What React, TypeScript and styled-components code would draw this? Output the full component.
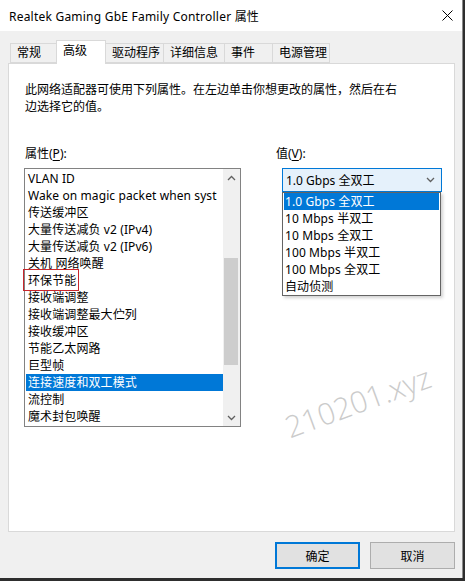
import React from 'react';
import styled, { createGlobalStyle, css } from 'styled-components';

const TABS = [
  { label: '常规', width: 47 },
  { label: '高级', width: 50, active: true },
  { label: '驱动程序', width: 58 },
  { label: '详细信息', width: 61 },
  { label: '事件', width: 48 },
  { label: '电源管理', width: 57 },
];

const PROPERTIES = [
  'VLAN ID',
  'Wake on magic packet when syst',
  '传送缓冲区',
  '大量传送减负 v2 (IPv4)',
  '大量传送减负 v2 (IPv6)',
  '关机 网络唤醒',
  '环保节能',
  '接收端调整',
  '接收端调整最大伫列',
  '接收缓冲区',
  '节能乙太网路',
  '巨型帧',
  '连接速度和双工模式',
  '流控制',
  '魔术封包唤醒',
];

const VALUES = [
  '1.0 Gbps 全双工',
  '10 Mbps 半双工',
  '10 Mbps 全双工',
  '100 Mbps 半双工',
  '100 Mbps 全双工',
  '自动侦测',
];

const GlobalStyle = createGlobalStyle`
  html, body {
    margin: 0;
    padding: 0;
    background: #2e2e2e;
  }
  body {
    font-family: "Noto Sans", "Noto Sans CJK SC", sans-serif;
    font-size: 12px;
    color: #000;
  }
  * { box-sizing: border-box; }
`;

const Window = styled.div`
  width: 463px;
  height: 578px;
  background: #f0f0f0;
  border-right: 1px solid #8a8a8a;
  display: flex;
  flex-direction: column;
`;

const TitleBar = styled.div`
  height: 31px;
  background: #fff;
  display: flex;
  align-items: center;
  padding-left: 9px;
  padding-right: 8px;
`;

const Title = styled.div`
  flex: 1;
  font-size: 12px;
  letter-spacing: 0.22px;
`;

const Body = styled.div`
  padding: 9px 7px 0 8px;
  display: flex;
  flex-direction: column;
`;

const TabStrip = styled.div`
  display: flex;
  align-items: flex-end;
  padding-left: 2px;
  height: 23px;
  position: relative;
  z-index: 1;
`;

const Tab = styled.div<{ $w: number; $active?: boolean }>`
  width: ${(p) => p.$w}px;
  height: 20px;
  border: 1px solid #d9d9d9;
  border-left-width: 0;
  background: #f0f0f0;
  padding-left: 6px;
  line-height: 18px;
  white-space: nowrap;

  &:first-child {
    border-left-width: 1px;
  }

  ${(p) => p.$active && css`
    height: 24px;
    margin-bottom: -1px;
    background: #fff;
    border-left-width: 1px;
    border-bottom: none;
    line-height: 20px;
    margin-left: -1px;
  `}
`;

const Panel = styled.div`
  position: relative;
  height: 469px;
  background: #fff;
  border: 1px solid #d9d9d9;
  padding: 17px 16px 0 16px;
  overflow: hidden;
`;

const Description = styled.p`
  margin: 0;
  max-width: 380px;
  line-height: 17px;
`;

const Columns = styled.div`
  display: grid;
  grid-template-columns: 251px 1fr;
  margin-top: 30px;
`;

const Column = styled.div`
  display: flex;
  flex-direction: column;
  position: relative;
`;

const FieldLabel = styled.div`
  line-height: 17px;
  margin-bottom: 6px;

  u { text-underline-offset: 2px; }
`;

const ListBox = styled.div`
  width: 217px;
  height: 259px;
  margin-left: -1px;
  border: 1px solid #828282;
  display: flex;
  background: #fff;
`;

const ListItems = styled.div`
  flex: 1;
  min-width: 0;
  padding: 1px 0 0 1px;
`;

const ListItem = styled.div<{ $selected?: boolean; $marked?: boolean }>`
  height: 17px;
  line-height: 17px;
  padding-left: 2px;
  white-space: nowrap;
  overflow: ${(p) => (p.$marked ? 'visible' : 'hidden')};
  letter-spacing: 0.1px;

  ${(p) => p.$selected && css`
    background: #0078d7;
    color: #fff;
  `}
`;

const Marked = styled.span`
  position: relative;
  display: inline-block;

  &::after {
    content: '';
    position: absolute;
    left: -5px;
    right: -3px;
    top: -3px;
    bottom: -2px;
    border: 1px solid #c8262b;
  }
`;

const ScrollBar = styled.div`
  width: 17px;
  background: #f0f0f0;
  display: flex;
  flex-direction: column;
`;

const ScrollArrow = styled.div`
  height: 17px;
  display: flex;
  align-items: center;
  justify-content: center;
`;

const ScrollTrack = styled.div`
  flex: 1;
  padding: 72px 2px 0 1px;
`;

const ScrollThumb = styled.div`
  height: 107px;
  background: #cdcdcd;
`;

const ComboWrap = styled.div`
  position: relative;
  margin-left: 6px;
  width: 160px;
`;

const Combo = styled.div`
  height: 24px;
  border: 1px solid #0078d7;
  background: #e5f1fb;
  display: flex;
  align-items: center;
  padding: 0 6px 0 3px;
  justify-content: space-between;
`;

const DropList = styled.div`
  position: absolute;
  top: 24px;
  left: 0;
  width: 159px;
  border: 1px solid #646464;
  background: #fff;
  padding: 0 1px;
  box-shadow: 2px 2px 3px rgba(0, 0, 0, 0.18);
  z-index: 2;
`;

const DropItem = styled.div<{ $selected?: boolean }>`
  height: 17px;
  line-height: 17px;
  padding-left: 1px;
  white-space: nowrap;
  letter-spacing: 0.1px;

  ${(p) => p.$selected && css`
    background: #0078d7;
    color: #fff;
  `}
`;

const Watermark = styled.span`
  position: absolute;
  left: 284px;
  top: 342px;
  font-family: "Open Sans", "Noto Sans", sans-serif;
  font-weight: 300;
  font-size: 30px;
  color: #cbcbcb;
  transform: rotate(-20deg);
  transform-origin: left bottom;
  pointer-events: none;
`;

const ButtonRow = styled.div`
  display: flex;
  justify-content: flex-end;
  gap: 10px;
  margin-top: 10px;
`;

const Button = styled.button<{ $default?: boolean }>`
  width: 85px;
  height: 27px;
  font: inherit;
  color: #000;
  background: #e1e1e1;
  border: 1px solid #adadad;
  padding: 0;

  ${(p) => p.$default && css`
    border: 2px solid #0078d7;
  `}
`;

const Chevron = ({ up, color = '#606060' }: { up?: boolean; color?: string }) => (
  <svg width="9" height="6" viewBox="0 0 9 6">
    <path
      d={up ? 'M1 5 L4.5 1.5 L8 5' : 'M1 1 L4.5 4.5 L8 1'}
      fill="none"
      stroke={color}
      strokeWidth="1.3"
    />
  </svg>
);

export default function App(): JSX.Element {
  return (
    <>
      <GlobalStyle />
      <Window>
        <TitleBar>
          <Title>Realtek Gaming GbE Family Controller 属性</Title>
          <svg width="11" height="11" viewBox="0 0 11 11" style={{ marginRight: 1 }}>
            <path d="M0.5 0.5 L10.5 10.5 M10.5 0.5 L0.5 10.5" stroke="#000" strokeWidth="1" />
          </svg>
        </TitleBar>
        <Body>
          <TabStrip>
            {TABS.map((t) => (
              <Tab key={t.label} $w={t.width} $active={t.active}>{t.label}</Tab>
            ))}
          </TabStrip>
          <Panel>
            <Description>
              此网络适配器可使用下列属性。在左边单击你想更改的属性，然后在右边选择它的值。
            </Description>
            <Columns>
              <Column>
                <FieldLabel>属性(<u>P</u>):</FieldLabel>
                <ListBox>
                  <ListItems>
                    {PROPERTIES.map((item) => (
                      <ListItem
                        key={item}
                        $selected={item === '连接速度和双工模式'}
                        $marked={item === '环保节能'}
                      >
                        {item === '环保节能' ? <Marked>{item}</Marked> : item}
                      </ListItem>
                    ))}
                  </ListItems>
                  <ScrollBar>
                    <ScrollArrow><Chevron up /></ScrollArrow>
                    <ScrollTrack><ScrollThumb /></ScrollTrack>
                    <ScrollArrow><Chevron /></ScrollArrow>
                  </ScrollBar>
                </ListBox>
              </Column>
              <Column>
                <FieldLabel>值(<u>V</u>):</FieldLabel>
                <ComboWrap>
                  <Combo>
                    <span>1.0 Gbps 全双工</span>
                    <Chevron />
                  </Combo>
                  <DropList>
                    {VALUES.map((v, i) => (
                      <DropItem key={v} $selected={i === 0}>{v}</DropItem>
                    ))}
                  </DropList>
                </ComboWrap>
              </Column>
            </Columns>
            <Watermark>210201.xyz</Watermark>
          </Panel>
          <ButtonRow>
            <Button $default>确定</Button>
            <Button>取消</Button>
          </ButtonRow>
        </Body>
      </Window>
    </>
  );
}
